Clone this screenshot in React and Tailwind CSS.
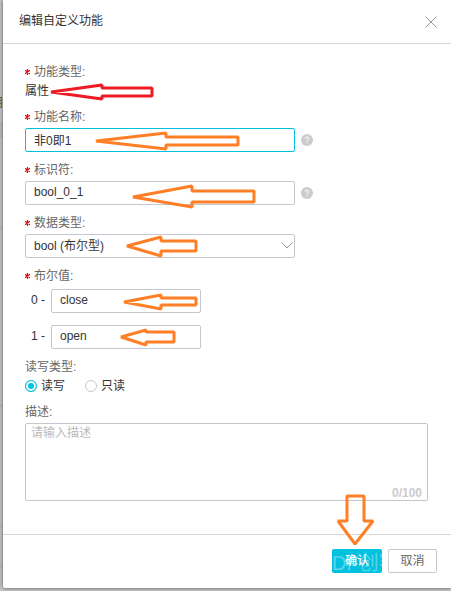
import React, { useState } from "react";

const inputClass =
  "block h-6 rounded-[2px] border border-[#c3c7cf] bg-white px-2 text-xs text-[#333] outline-none";

// hand drawn arrows that mark the steps of the form
const arrows = [
  {
    color: "#ed1c24",
    points: "51,92 102,85 102,88 152,88 152,96 102,96 102,99",
  },
  {
    color: "#ff7f27",
    points: "96,141 166,133 166,137 238,137 238,145 166,145 166,149",
  },
  {
    color: "#ff7f27",
    points: "133,197 192,186 192,191 254,191 254,202 192,202 192,207",
  },
  {
    color: "#ff7f27",
    points: "127,246 161,237 161,241 196,241 196,251 161,251 161,256",
  },
  {
    color: "#ff7f27",
    points: "124,302 161,295 161,298 196,298 196,305 161,305 161,309",
  },
  {
    color: "#ff7f27",
    points: "121,337 146,330 146,332 174,332 174,342 146,342 146,345",
  },
  {
    color: "#ff7f27",
    points: "347,496 364,496 364,521 373,521 355,544 338,521 347,521",
  },
];

const Label = ({ htmlFor, required, children }) => (
  <label
    htmlFor={htmlFor}
    className="mb-0.5 flex items-center gap-1 text-xs leading-[18px] text-[#666]"
  >
    {required && (
      <svg width="5" height="6" viewBox="0 0 5 6" className="shrink-0">
        <path
          d="M2.5 0v6M0 1.200l5 3.600M5 1.200l-5 3.600"
          stroke="#f00000"
          strokeWidth="1.200"
          fill="none"
        />
      </svg>
    )}
    {children}
  </label>
);

const HelpIcon = () => (
  <svg width="12" height="12" viewBox="0 0 12 12" className="shrink-0">
    <circle cx="6" cy="6" r="6" fill="#ccc" />
    <path
      d="M4.300 4.700c0-2.200 3.400-2.200 3.400-.1C7.700 5.800 6 5.900 6 7.300M6 8.300v1.200"
      stroke="#f2f2f2"
      strokeWidth="1.200"
      fill="none"
    />
  </svg>
);

const Radio = ({ value, checked, onChange, children }) => (
  <label className="flex items-center gap-1 text-xs text-[#333]">
    <input
      type="radio"
      name="access"
      value={value}
      checked={checked}
      onChange={onChange}
      className="size-3 appearance-none rounded-full border border-[#c3c7cf] bg-white checked:border-[#00c1de] checked:bg-[#00c1de] checked:shadow-[inset_0_0_0_2px_white]"
    />
    {children}
  </label>
);

const App = () => {
  const [name, setName] = useState("非0即1");
  const [identifier, setIdentifier] = useState("bool_0_1");
  const [dataType, setDataType] = useState("bool");
  const [falseText, setFalseText] = useState("close");
  const [trueText, setTrueText] = useState("open");
  const [access, setAccess] = useState("rw");
  const [description, setDescription] = useState("");

  const handleSubmit = (e) => {
    e.preventDefault();
  };

  return (
    <div className="relative min-h-screen overflow-hidden bg-[#c8c8c8] pb-0.5 pl-[3px] font-['Liberation_Sans','Noto_Sans_CJK_SC',sans-serif]">
      {/* table of the page behind the dialog */}
      <div className="absolute inset-y-0 left-0 w-[3px] overflow-hidden">
        <div className="h-[124px] border-b border-[#b4b4b4] pt-[95px]">
          <span className="float-right text-xs leading-4 text-[#555]">用</span>
        </div>
        <div className="h-3.5 bg-[#bfbfbf]"></div>
        <div className="h-[91px] border-b border-[#b4b4b4]"></div>
        <div className="h-[177px] border-b border-[#b4b4b4]"></div>
        <div className="h-[121px] border-b border-[#b4b4b4]"></div>
        <div className="h-10 border-b border-[#b4b4b4]"></div>
      </div>

      <form
        onSubmit={handleSubmit}
        className="relative rounded-bl-[2px] bg-white shadow-[0_0_4px_rgba(0,0,0,0.6)]"
      >
        <div className="flex h-11 items-center justify-between border-b border-[#d8d8d8] pr-3.5 pl-4">
          <h1 className="pb-0.5 text-xs text-[#333]">编辑自定义功能</h1>
          <button type="button" aria-label="关闭">
            <svg width="12" height="12" viewBox="0 0 12 12">
              <path d="M.5 .5l11 11M11.500 .5l-11 11" stroke="#999" />
            </svg>
          </button>
        </div>

        <div className="flex flex-col gap-[9px] pt-[19px] pr-[23px] pb-[33px] pl-[22px]">
          <div>
            <Label required>功能类型:</Label>
            <p className="text-xs leading-4 text-[#333]">属性</p>
          </div>

          <div>
            <Label htmlFor="name" required>
              功能名称:
            </Label>
            <div className="flex items-center gap-1.5">
              <input
                type="text"
                id="name"
                value={name}
                onChange={(e) => setName(e.target.value)}
                className="block h-6 w-[270px] rounded-[2px] border border-[#00c1de] bg-white px-2 pb-0.5 text-xs text-[#333] outline-none"
              />
              <HelpIcon />
            </div>
          </div>

          <div>
            <Label htmlFor="identifier" required>
              标识符:
            </Label>
            <div className="flex items-center gap-1.5">
              <input
                type="text"
                id="identifier"
                value={identifier}
                onChange={(e) => setIdentifier(e.target.value)}
                className={`${inputClass} w-[270px] pb-0.5`}
              />
              <HelpIcon />
            </div>
          </div>

          <div>
            <Label htmlFor="data-type" required>
              数据类型:
            </Label>
            <div className="relative w-[270px]">
              <select
                id="data-type"
                value={dataType}
                onChange={(e) => setDataType(e.target.value)}
                className={`${inputClass} w-full appearance-none`}
              >
                <option value="bool">bool (布尔型)</option>
              </select>
              <svg
                width="12"
                height="7"
                viewBox="0 0 12 7"
                className="pointer-events-none absolute top-2 right-0.5"
              >
                <path
                  d="M.5 .5l5.500 5.500l5.500-5.500"
                  stroke="#999"
                  fill="none"
                />
              </svg>
            </div>
          </div>

          <div>
            <Label htmlFor="bool-false" required>
              布尔值:
            </Label>
            <div className="flex flex-col gap-3 pt-0.5 pl-1.5 text-xs text-[#333]">
              <div className="flex items-center">
                <label htmlFor="bool-false" className="w-5 pb-0.5">
                  0 -
                </label>
                <input
                  type="text"
                  id="bool-false"
                  value={falseText}
                  onChange={(e) => setFalseText(e.target.value)}
                  className={`${inputClass} w-[150px] pb-0.5`}
                />
              </div>
              <div className="flex items-center">
                <label htmlFor="bool-true" className="w-5 pb-0.5">
                  1 -
                </label>
                <input
                  type="text"
                  id="bool-true"
                  value={trueText}
                  onChange={(e) => setTrueText(e.target.value)}
                  className={`${inputClass} w-[150px] pb-0.5`}
                />
              </div>
            </div>
          </div>

          <div>
            <Label>读写类型:</Label>
            <div className="flex h-4 items-center gap-5">
              <Radio
                value="rw"
                checked={access === "rw"}
                onChange={() => setAccess("rw")}
              >
                读写
              </Radio>
              <Radio
                value="r"
                checked={access === "r"}
                onChange={() => setAccess("r")}
              >
                只读
              </Radio>
            </div>
          </div>

          <div>
            <Label htmlFor="description">描述:</Label>
            <div className="relative">
              <textarea
                id="description"
                maxLength={100}
                value={description}
                onChange={(e) => setDescription(e.target.value)}
                placeholder="请输入描述"
                className="block h-[78px] w-full resize-none rounded-[2px] border border-[#c3c7cf] px-[5px] text-xs leading-[18px] text-[#333] outline-none placeholder:text-[#bbb]"
              ></textarea>
              <span className="absolute right-1.5 bottom-0 text-xs font-bold text-[#ccc]">
                {description.length}/100
              </span>
            </div>
          </div>
        </div>

        <div className="relative flex justify-end gap-1.5 overflow-hidden border-t border-[#d8d8d8] pt-3.5 pr-3.5 pb-[15px] text-xs">
          <button
            type="submit"
            className="h-6 w-[50px] rounded-[2px] bg-[#00c1de] font-medium text-white"
          >
            确认
          </button>
          <button
            type="button"
            className="h-6 w-[49px] rounded-[2px] border border-[#c3c7cf] bg-white text-[#555]"
          >
            取消
          </button>
          {/* watermark */}
          <span className="pointer-events-none absolute top-3.5 right-0 w-[119px] overflow-hidden text-xl leading-7 whitespace-nowrap text-white/35">
            DF创客社区
          </span>
        </div>
      </form>

      <svg
        width="451"
        height="591"
        viewBox="0 0 451 591"
        className="pointer-events-none absolute top-0 left-0"
      >
        {arrows.map((i) => (
          <polygon
            key={i.points}
            points={i.points}
            fill="none"
            stroke={i.color}
            strokeWidth="3"
            strokeLinejoin="bevel"
          />
        ))}
      </svg>
    </div>
  );
};

export default App;
